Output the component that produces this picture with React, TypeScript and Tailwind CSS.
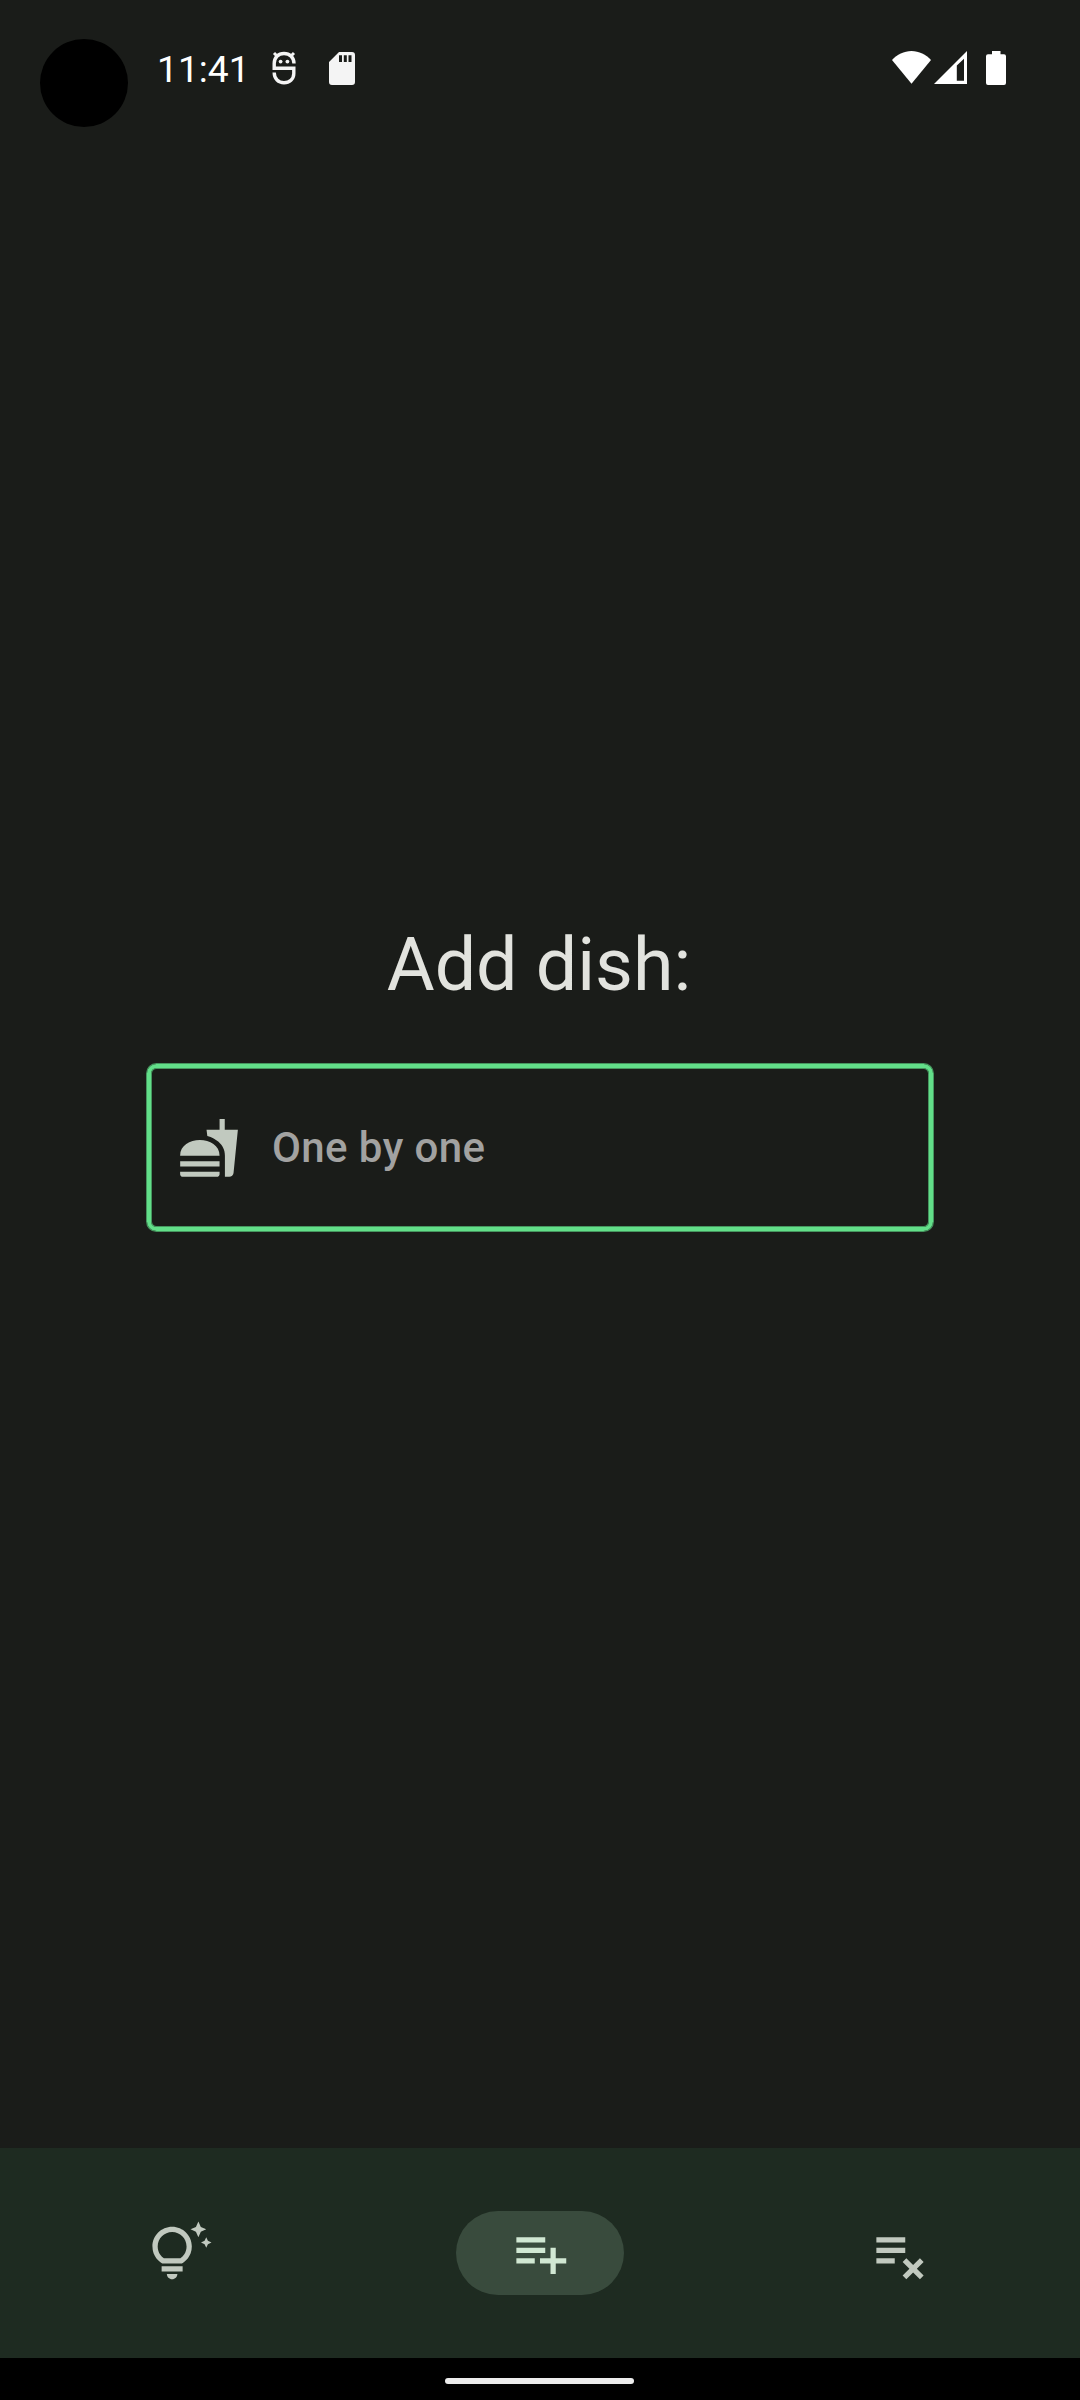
import type { ReactNode } from "react";

const FAST_FOOD =
  "M18.06 22.99h1.66c.84 0 1.53-.64 1.63-1.46L23 5.05h-5V1h-1.97v4.05h-4.97l.3 2.34c1.71.47 3.31 1.32 4.27 2.26 1.44 1.42 2.43 2.89 2.43 5.29v8.05zM1 21.99V21h15.03v.99c0 .55-.45 1-1.01 1H2.01c-.56 0-1.01-.45-1.01-1zm15.03-7c0-8-15.03-8-15.03 0h15.03zM1.02 17h15v2h-15z";
const TIPS =
  "M7 20h4c0 1.1-.9 2-2 2s-2-.9-2-2zm-2-1h8v-2H5v2zm11.5-9.5c0 3.82-2.66 5.86-3.77 6.5H5.27c-1.11-.64-3.77-2.68-3.77-6.5C1.5 5.36 4.86 2 9 2s7.5 3.36 7.5 7.5zm-2 0C14.5 6.47 12.03 4 9 4S3.5 6.47 3.5 9.5c0 2.47 1.49 3.89 2.35 4.5h6.3c.86-.61 2.35-2.03 2.35-4.5zm6.87-2.13L20 8l1.37.63L22 10l.63-1.37L24 8l-1.37-.63L22 6l-.63 1.37zM19 6l.94-2.06L22 3l-2.06-.94L19 0l-.94 2.06L16 3l2.06.94L19 6z";
const LIST_ADD =
  "M14 10H3v2h11v-2zm0-4H3v2h11V6zm4 8v-4h-2v4h-4v2h4v4h2v-4h4v-2h-4zM3 16h7v-2H3v2z";
const LIST_REMOVE =
  "M14 10H3v2h11v-2zm0-4H3v2h11V6zM3 16h7v-2H3v2zm11.41 6L17 19.41 19.59 22 21 20.59 18.41 18 21 15.41 19.59 14 17 16.59 14.41 14 13 15.41 15.59 18 13 20.59 14.41 22z";

function Icon({ d }: { d: string }) {
  return (
    <svg viewBox="-0.19 -0.19 24.38 24.38" className="size-16 shrink-0" fill="currentColor">
      <path d={d} />
    </svg>
  );
}

function StatusBar() {
  return (
    <header className="flex h-[136px] items-start pl-10 text-white">
      <div className="mt-[39px] size-[88px] shrink-0 rounded-full bg-black" />
      <time className="mt-[47px] ml-[29px] w-[92px] whitespace-nowrap text-[37.2px] leading-[44px]">11:41</time>
      <svg viewBox="0 0 24 34" className="mt-[51px] ml-[23px] h-[34px] w-6" fill="none" stroke="#f4f4f4" strokeWidth="3.4">
        <path d="M22 12.5C22 6.5 17.7 2.5 12 2.5S2.2 6.5 2.2 12.5V17.3H21.8V22.5C21.8 28 17.5 31.7 12 31.7S2.2 28 2.2 21.5" />
        <path d="M5 5 2 2M19 5l3-3" strokeWidth="3" />
        <circle cx="8.6" cy="10.6" r="1.9" fill="#f4f4f4" stroke="none" />
        <circle cx="15.4" cy="10.6" r="1.9" fill="#f4f4f4" stroke="none" />
      </svg>
      <svg viewBox="0 0 26 33" className="mt-[51.5px] ml-[33px] h-[33px] w-[26px]" fill="#f4f4f4">
        <path
          fillRule="evenodd"
          d="M10 0H23a3 3 0 0 1 3 3V30a3 3 0 0 1-3 3H3a3 3 0 0 1-3-3V10zM10 3.2V10h3V3.2zM14.8 3.2V10h3V3.2zM19.5 3.2V10h3V3.2z"
        />
      </svg>
      <div className="mt-[51px] mr-[74px] ml-auto flex">
        <svg viewBox="0 0 39 33" className="h-[33px] w-[39px]" fill="white">
          <path d="M19.5 32.7 0 9.1C5 3.5 12 0 19.5 0S34 3.5 39 9.1z" />
        </svg>
        <svg viewBox="0 0 33 33" className="ml-[3px] h-[33px] w-[33px]" fill="white">
          <path fillRule="evenodd" d="M33 0V33H0zM30 7.7 22.8 14.5V29.8H30z" />
        </svg>
        <svg viewBox="0 0 20 34" className="ml-[19px] h-[34px] w-5" fill="white">
          <path d="M6 0h8.5v3.2H18a2 2 0 0 1 2 2V32a2 2 0 0 1-2 2H2a2 2 0 0 1-2-2V5.2a2 2 0 0 1 2-2h4z" />
        </svg>
      </div>
    </header>
  );
}

function NavItem({ active, children }: { active?: boolean; children: ReactNode }) {
  return (
    <button
      className={
        active
          ? "flex h-[84px] w-[168px] items-center justify-center rounded-full bg-[#394b3d] text-[#d1e8d3]"
          : "flex h-[84px] w-[168px] items-center justify-center rounded-full text-[#c1c9bf]"
      }
    >
      {children}
    </button>
  );
}

export default function App() {
  return (
    <div className="flex h-[2400px] w-[1080px] flex-col overflow-hidden bg-[#1a1c19] font-[Roboto,sans-serif]">
      <StatusBar />
      <main className="flex flex-1 flex-col items-center pt-[779px]">
        <h1 className="pr-0.5 text-[73.5px] leading-[100px] text-[#e2e3de]">Add dish:</h1>
        <button className="mt-[49px] flex h-[167px] w-[786px] items-center rounded-[9.5px] border-4 border-[#62df89] pl-[26px] text-left shadow-[0_0_0_1px_#62df89a0,inset_0_0_0_1px_#62df89a0]">
          <span className="text-[#c1c9bf]">
            <Icon d={FAST_FOOD} />
          </span>
          <span className="ml-[31px] text-[42px] font-medium tracking-[0.4px] text-[#a2a2a1]">One by one</span>
        </button>
      </main>
      <nav className="grid h-[210px] grid-cols-3 place-items-center bg-[#1e2b21]">
        <NavItem>
          <Icon d={TIPS} />
        </NavItem>
        <NavItem active>
          <Icon d={LIST_ADD} />
        </NavItem>
        <NavItem>
          <Icon d={LIST_REMOVE} />
        </NavItem>
      </nav>
      <footer className="flex h-[42px] justify-center bg-black pt-5 pr-px">
        <div className="h-1.5 w-[189px] rounded-full bg-[#ececec]" />
      </footer>
    </div>
  );
}
